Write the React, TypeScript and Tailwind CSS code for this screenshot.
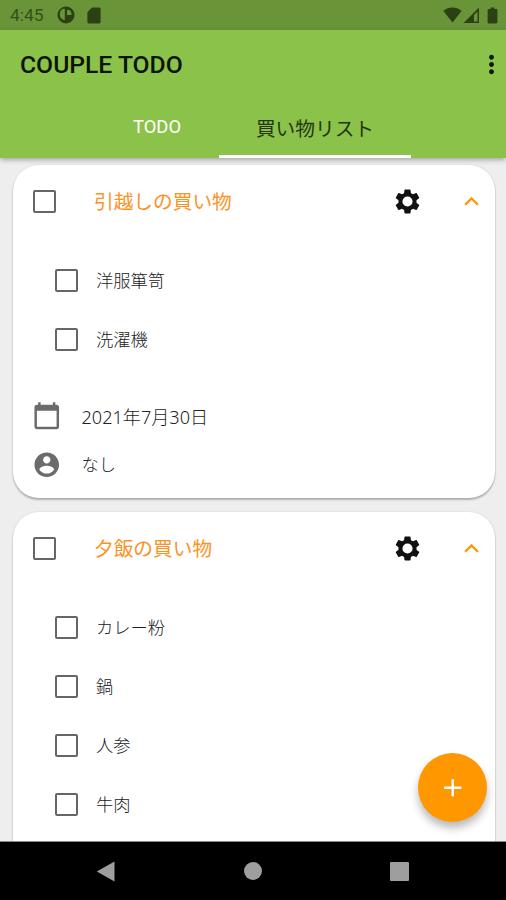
import React, { useState } from 'react'

type ShoppingList = {
  id: number
  title: string
  items: string[]
  date?: string
  assignee?: string
}

const LISTS: ShoppingList[] = [
  {
    id: 1,
    title: '引越しの買い物',
    items: ['洋服箪笥', '洗濯機'],
    date: '2021年7月30日',
    assignee: 'なし',
  },
  {
    id: 2,
    title: '夕飯の買い物',
    items: ['カレー粉', '鍋', '人参', '牛肉'],
  },
]

export default function App() {
  return (
    <div className="flex flex-col w-full h-[900px] overflow-hidden bg-[#eeeeee] font-['Roboto','Noto_Sans_CJK_JP',sans-serif]">
      <StatusBar />
      <Header />
      <main className="relative flex-1 min-h-0 overflow-hidden border-b border-[#8a8a8a]">
        <div className="flex flex-col gap-[14px] pt-[7px] pl-[13px] pr-[11px]">
          {LISTS.map((list) => (
            <ListCard key={list.id} list={list} />
          ))}
        </div>
        <button
          aria-label="Add"
          className="absolute right-[19px] bottom-[19px] flex items-center justify-center size-[69px] rounded-full bg-[#ff9800] shadow-[0_6px_9px_rgba(0,0,0,0.28)]"
        >
          <svg width="29.5" height="29.5" viewBox="0 0 24 24" fill="#fff"><path d="M19 13h-6v6h-2v-6H5v-2h6V5h2v6h6v2z"/></svg>
        </button>
      </main>
      <NavBar />
    </div>
  )
}

function StatusBar() {
  return (
    <div className="flex items-center shrink-0 h-[30px] pl-[10px] pr-[8px] bg-[#6a9438] text-[#2b4114]">
      <span className="text-[17.4px] leading-none pt-[2px] text-[#35501b]">4:45</span>
      <svg className="ml-[13px]" width="18" height="18" viewBox="0 0 18 18">
        <circle cx="9" cy="9" r="8.500" fill="currentColor"/>
        <path d="M4 4.200C5 3.200 6 2.800 7.800 2.800v11.400C4.800 13.800 2.800 11.600 2.800 8.600c0-1.700.4-3.300 1.200-4.400z" fill="#6a9438"/>
        <path d="M10 4h2.200c1 .6 1.800 1.600 2.200 2.800v2.200H10z" fill="#6a9438"/>
      </svg>
      <svg className="ml-[12px]" width="14" height="17" viewBox="0 0 14 17" fill="currentColor">
        <path d="M5 .5h7.200c.8 0 1.400.6 1.400 1.400v13.200c0 .8-.6 1.400-1.400 1.400H1.800c-.8 0-1.400-.6-1.400-1.400V5.200z"/>
      </svg>
      <div className="flex items-center ml-auto">
        <svg width="19" height="16" viewBox="0 0 19 16" fill="currentColor"><path d="M9.500 15.500L.4 3.900C3 1.700 6.100.5 9.500.5s6.500 1.200 9.100 3.400z"/></svg>
        <svg className="ml-px" width="17" height="17" viewBox="0 0 17 17" fill="currentColor">
          <path fillRule="evenodd" d="M16 .5V16H.5zM14.500 4.500L11 8V14.500H14.500z"/>
        </svg>
        <svg className="ml-[7px]" width="11" height="17" viewBox="0 0 11 17" fill="currentColor">
          <path d="M3.500.5h4v1.600h1.700c.7 0 1.200.5 1.200 1.200v12c0 .7-.5 1.200-1.200 1.200H1.800c-.7 0-1.200-.5-1.200-1.200v-12c0-.7.5-1.200 1.200-1.200h1.700z"/>
        </svg>
      </div>
    </div>
  )
}

function Header() {
  return (
    <header className="relative z-10 flex flex-col shrink-0 h-[128px] bg-[#8bc34a] shadow-[0_2px_5px_rgba(0,0,0,0.3)]">
      <div className="flex items-center justify-between h-[69px] pl-[20px]">
        <h1 className="pt-[2px] text-[24.7px] font-medium leading-none text-[#0c1405]">COUPLE TODO</h1>
        <svg width="29" height="29" viewBox="0 0 24 24" fill="#0c1405"><path d="M12 8c1.100 0 2-.9 2-2s-.9-2-2-2-2 .9-2 2 .9 2 2 2zm0 2c-1.100 0-2 .9-2 2s.9 2 2 2 2-.9 2-2-.9-2-2-2zm0 6c-1.100 0-2 .9-2 2s.9 2 2 2 2-.9 2-2-.9-2-2-2z"/></svg>
      </div>
      <nav className="flex flex-1 pl-[95px]">
        <div className="flex justify-center w-[124px] pt-[18px] text-[18.4px] leading-[20px] text-white">TODO</div>
        <div className="flex justify-center w-[192px] pt-[21px] border-b-3 border-white text-[19.7px] leading-[20px] text-[#24360f]">
          買い物リスト
        </div>
      </nav>
    </header>
  )
}

function ListCard({ list }: { list: ShoppingList }) {
  const [open, setOpen] = useState(true)

  return (
    <section className="shrink-0 pb-[9px] rounded-[26px] bg-white shadow-[0_2px_2px_rgba(0,0,0,0.26),0_0_2px_rgba(0,0,0,0.12)]">
      <div className="flex items-center h-[73px] pl-[20px] pr-[9px]">
        <Checkbox />
        <h2 className="ml-[38px] pt-[3px] text-[19.7px] leading-none text-[#fb9225]">{list.title}</h2>
        <svg className="ml-auto" width="29" height="29" viewBox="0 0 24 24" fill="#111">
          <path fillRule="evenodd" d="M19.430 12.980c.04-.32.07-.64.07-.98s-.03-.66-.07-.98l2.110-1.650c.19-.15.24-.42.12-.64l-2-3.460c-.12-.22-.39-.3-.61-.22l-2.490 1c-.52-.4-1.080-.73-1.690-.98l-.38-2.650C14.460 2.180 14.250 2 14 2h-4c-.25 0-.46.18-.49.42l-.38 2.650c-.61.25-1.170.59-1.690.98l-2.490-1c-.23-.09-.49 0-.61.22l-2 3.460c-.13.22-.07.49.12.64l2.110 1.650c-.04.32-.07.65-.07.98s.03.66.07.98l-2.110 1.650c-.19.15-.24.42-.12.64l2 3.460c.12.22.39.3.61.22l2.490-1c.52.4 1.080.73 1.690.98l.38 2.650c.03.24.24.42.49.42h4c.25 0 .46-.18.49-.42l.38-2.650c.61-.25 1.170-.59 1.690-.98l2.490 1c.23.09.49 0 .61-.22l2-3.460c.12-.22.07-.49-.12-.64zM12 16.200a4.200 4.200 0 110-8.400 4.200 4.200 0 010 8.400z"/>
        </svg>
        <button className="ml-[35px]" onClick={() => setOpen(!open)}>
          <svg className={open ? '' : 'rotate-180'} width="29" height="29" viewBox="0 0 24 24" fill="#ff9800"><path d="M12 8l-6 6 1.410 1.410L12 10.830l4.590 4.580L18 14z"/></svg>
        </button>
      </div>

      {open && (
        <>
          <ul className="pt-[13px] pl-[42px]">
            {list.items.map((item) => (
              <li key={item} className="flex items-center h-[59px]">
                <Checkbox />
                <span className="ml-[18px] pt-[3px] text-[17.3px] font-light leading-none text-[#222]">{item}</span>
              </li>
            ))}
          </ul>
          <div className="flex flex-col pt-[22px] pl-[19px] text-[17.3px] font-light leading-none text-[#222]">
            {list.date && (
              <div className="flex items-center h-[49px]">
                <svg width="29.5" height="29.5" viewBox="0 0 24 24" fill="#6b6b6b"><path d="M20 3h-1V1h-2v2H7V1H5v2H4c-1.100 0-2 .9-2 2v16c0 1.100.9 2 2 2h16c1.100 0 2-.9 2-2V5c0-1.100-.9-2-2-2zm0 18H4V8h16v13z"/></svg>
                <span className="ml-[20px] pt-[3px] font-['Noto_Sans','Noto_Sans_CJK_JP',sans-serif] text-[18.1px]">{list.date}</span>
              </div>
            )}
            {list.assignee && (
              <div className="flex items-center h-[49px]">
                <svg width="29.5" height="29.5" viewBox="0 0 24 24" fill="#6b6b6b"><path d="M12 2C6.480 2 2 6.480 2 12s4.480 10 10 10 10-4.480 10-10S17.520 2 12 2zm0 3c1.660 0 3 1.340 3 3s-1.340 3-3 3-3-1.340-3-3 1.340-3 3-3zm0 14.200c-2.500 0-4.710-1.280-6-3.220.03-1.990 4-3.080 6-3.080 1.990 0 5.970 1.090 6 3.080-1.290 1.940-3.500 3.220-6 3.220z"/></svg>
                <span className="ml-[20px] pt-[3px]">{list.assignee}</span>
              </div>
            )}
          </div>
        </>
      )}
    </section>
  )
}

function Checkbox() {
  const [checked, setChecked] = useState(false)

  return (
    <button
      role="checkbox"
      aria-checked={checked}
      onClick={() => setChecked(!checked)}
      className={`shrink-0 size-[23px] border-2 border-[#666] rounded-[2px] ${checked ? 'bg-[#666]' : ''}`}
    />
  )
}

function NavBar() {
  return (
    <div className="flex items-center justify-between shrink-0 h-[58px] pl-[96px] pr-[97px] bg-black">
      <svg width="19" height="21" viewBox="0 0 19 21" fill="#9e9e9e"><path d="M18.500.5v20L.8 10.500z"/></svg>
      <div className="size-[18px] rounded-full bg-[#9e9e9e]" />
      <div className="size-[19px] rounded-[1px] bg-[#9e9e9e]" />
    </div>
  )
}
